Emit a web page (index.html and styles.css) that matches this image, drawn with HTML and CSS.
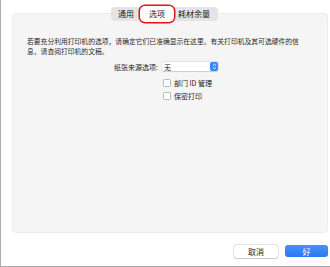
FILE: index.html
```html
<!DOCTYPE html>
<html lang="zh-CN">
<head>
    <meta charset="UTF-8">
    <meta name="viewport" content="width=device-width, initial-scale=1.0">
    <title>打印机选项</title>
    <link rel="stylesheet" href="styles.css">
</head>
<body>
    <div class="window">
        <div class="tabs">
            <div class="tab first">通用</div>
            <div class="tab active">选项</div>
            <div class="tab last">耗材余量</div>
        </div>
        <div class="panel">
            <p class="intro">若要充分利用打印机的选项，请确定它们已准确显示在这里。有关打印机及其可选硬件的信息，请查阅打印机的文稿。</p>
            <div class="form">
                <div class="row">
                    <label class="field-label">纸张来源选项:</label>
                    <div class="select">
                        <span>无</span>
                        <span class="stepper">
                            <svg width="5" height="7" viewBox="0 0 5 7">
                                <path d="M1 2.6 L2.5 1.2 L4 2.6 M1 4.4 L2.5 5.8 L4 4.4" fill="none" stroke="#fff" stroke-width="0.9"/>
                            </svg>
                        </span>
                    </div>
                </div>
                <div class="row check-row">
                    <span class="checkbox"></span>
                    <span>部门 ID 管理</span>
                </div>
                <div class="row check-row">
                    <span class="checkbox"></span>
                    <span>保密打印</span>
                </div>
            </div>
        </div>
        <div class="buttons">
            <button class="btn">取消</button>
            <button class="btn primary">好</button>
        </div>
    </div>
</body>
</html>
```

FILE: styles.css
```css
body {
    margin: 0;
    background-color: #ffffff;
    font-family: "Noto Sans CJK SC", "Noto Sans", sans-serif;
    color: #222222;
}
.window {
    width: 316px;
    height: 259px;
    padding: 7px 9px 0 11px;
    border-left: 1px solid #ababab;
    border-right: 1px solid #ababab;
    border-bottom: 1px solid #ababab;
    display: flex;
    flex-direction: column;
}
.tabs {
    align-self: flex-start;
    margin-left: 99px;
    height: 14px;
    display: flex;
    align-items: center;
    background-color: #e4e4e4;
    border-radius: 4px;
    position: relative;
    z-index: 1;
}
.tab {
    font-size: 8px;
    line-height: 12px;
    color: #222;
}
.tab.first {
    padding: 0 8px 0 7px;
}
.tab.last {
    padding: 0 8px 0 6px;
}
.tab.active {
    background-color: #ffffff;
    border-radius: 3px;
    padding: 0 7px;
    box-shadow: 0 0 0 2px #ffffff, 0 0 0 3.5px #e3151c;
}
.panel {
    margin-top: -8px;
    height: 204px;
    background-color: #f5f5f5;
    border: 1px solid #ececec;
    border-radius: 4px;
    padding: 14px 15px 0 14px;
}
.intro {
    margin: 8px 0 0 0;
    width: 275px;
    font-size: 6.8px;
    line-height: 10px;
    color: #2a2a2a;
}
.form {
    margin-top: 6px;
    display: flex;
    flex-direction: column;
    gap: 4px;
    font-size: 7px;
}
.row {
    display: flex;
    align-items: center;
    height: 9px;
}
.field-label {
    width: 131px;
    text-align: right;
    margin-right: 4px;
}
.select {
    width: 56px;
    height: 9px;
    background-color: #ffffff;
    border-radius: 2px;
    box-shadow: 0 0 0 0.5px rgba(0, 0, 0, 0.12), 0 0.5px 1px rgba(0, 0, 0, 0.12);
    display: flex;
    align-items: center;
    justify-content: space-between;
    padding-left: 2px;
    box-sizing: border-box;
}
.stepper {
    width: 8px;
    height: 9px;
    background-color: #3d86f5;
    border-radius: 2px;
    display: flex;
    align-items: center;
    justify-content: center;
}
.check-row {
    padding-left: 136px;
    gap: 3px;
    margin-top: 0;
}
.check-row:nth-child(2) {
    margin-top: 3px;
}
.checkbox {
    width: 6px;
    height: 6px;
    background: #ffffff;
    border: 0.5px solid #b8b8b8;
    border-radius: 1.5px;
}
.buttons {
    margin-top: 12px;
    display: flex;
    justify-content: flex-end;
    gap: 7px;
    padding-right: 0;
}
.btn {
    font-family: inherit;
    font-size: 8px;
    height: 13px;
    width: 44px;
    padding: 0;
    border: none;
    border-radius: 3px;
    background-color: #ffffff;
    color: #222;
    box-shadow: 0 0 0 0.5px rgba(0, 0, 0, 0.18), 0 0.5px 1px rgba(0, 0, 0, 0.15);
}
.btn.primary {
    width: 43px;
    height: 12px;
    color: #ffffff;
    background: linear-gradient(#4592f8, #2b77f1);
    box-shadow: none;
}
```
